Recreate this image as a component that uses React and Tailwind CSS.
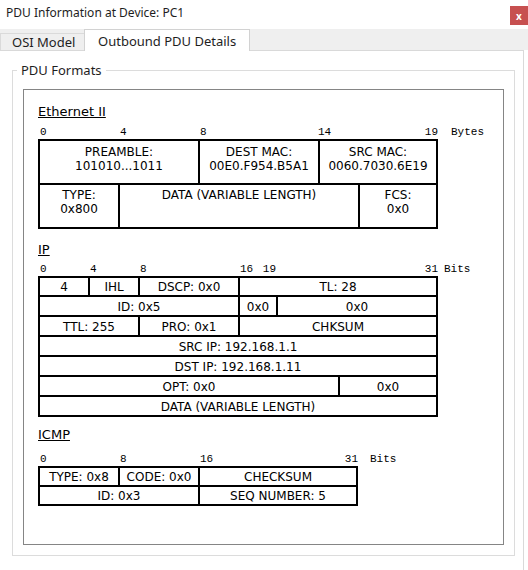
import React from 'react'

const sans = "font-['DejaVu_Sans',sans-serif]"
const mono = "font-['Liberation_Mono',monospace]"

const ethRows = [
  [
    { label: ['PREAMBLE:', '101010...1011'], w: 'w-[158px]' },
    { label: ['DEST MAC:', '00E0.F954.B5A1'], w: 'w-[120px]' },
    { label: ['SRC MAC:', '0060.7030.6E19'], w: 'flex-1' },
  ],
  [
    { label: ['TYPE:', '0x800'], w: 'w-[78px]' },
    { label: ['DATA (VARIABLE LENGTH)'], w: 'w-[240px]' },
    { label: ['FCS:', '0x0'], w: 'flex-1' },
  ],
]

const ipRows = [
  [
    { t: '4', w: 'w-[48px]' },
    { t: 'IHL', w: 'w-[50px]' },
    { t: 'DSCP: 0x0', w: 'w-[100px]' },
    { t: 'TL: 28', w: 'flex-1' },
  ],
  [
    { t: 'ID: 0x5', w: 'w-[198px]' },
    { t: '0x0', w: 'w-[38px]' },
    { t: '0x0', w: 'flex-1' },
  ],
  [
    { t: 'TTL: 255', w: 'w-[98px]' },
    { t: 'PRO: 0x1', w: 'w-[100px]' },
    { t: 'CHKSUM', w: 'flex-1' },
  ],
  [{ t: 'SRC IP: 192.168.1.1', w: 'flex-1' }],
  [{ t: 'DST IP: 192.168.1.11', w: 'flex-1' }],
  [
    { t: 'OPT: 0x0', w: 'w-[298px]' },
    { t: '0x0', w: 'flex-1' },
  ],
  [{ t: 'DATA (VARIABLE LENGTH)', w: 'flex-1' }],
]

const icmpRows = [
  [
    { t: 'TYPE: 0x8', w: 'w-[78px]' },
    { t: 'CODE: 0x0', w: 'w-[80px]' },
    { t: 'CHECKSUM', w: 'flex-1' },
  ],
  [
    { t: 'ID: 0x3', w: 'w-[158px]' },
    { t: 'SEQ NUMBER: 5', w: 'flex-1' },
  ],
]

const Heading = ({ children, className = '' }) => (
  <div className={`h-[16px] leading-[16px] text-[13px] text-black underline ${sans} ${className}`}>
    {children}
  </div>
)

// one-line rows (IP, ICMP)
const FieldTable = ({ rows, width, firstH, restH }) => (
  <div className={`${width} border-2 border-black ${sans} text-[12px] text-black`}>
    {rows.map((row, i) => (
      <div key={i} className={`flex ${i === 0 ? firstH : `${restH} border-t-2 border-black`}`}>
        {row.map((c, j) => (
          <div
            key={j}
            className={`${c.w} ${j > 0 ? 'border-l-2 border-black' : ''} flex items-center justify-center pt-[1px] whitespace-nowrap leading-none`}
          >
            {c.t}
          </div>
        ))}
      </div>
    ))}
  </div>
)

export default function App() {
  return (
    <div className="w-[528px] h-[570px] bg-white overflow-hidden font-['Noto_Sans',sans-serif] text-[#1e1e1e]">
      {/* title bar */}
      <div className="h-[29px] flex items-start">
        <div className="pl-[6px] pt-[4px] text-[12px] leading-[18px]">PDU Information at Device: PC1</div>
        <div className="ml-auto mt-[6px] w-[18px] h-[19px] bg-[#c75050] flex items-center justify-center">
          <span className="text-white text-[10px] font-bold leading-none">x</span>
        </div>
      </div>

      {/* tabs */}
      <div className="h-[21px] bg-[#efefef] flex items-start">
        <div className="mt-[4px] h-[17px] w-[84px] pl-[11px] border-t border-l border-[#dadada] text-[13px] leading-[16px]">
          OSI Model
        </div>
        <div className="relative z-10 h-[22px] w-[166px] pl-[13px] pt-[2px] bg-white border-t border-x border-[#d2d2d2] text-[13px] leading-[18px]">
          Outbound PDU Details
        </div>
      </div>

      {/* tab panel */}
      <div className="w-[524px] h-[520px] border-t border-r border-[#d9d9d9] pl-[12px] pt-[19px]">
        <div className="relative w-[503px] h-[486px] border border-[#dcdcdc] px-[10px] pt-[18px] pb-[10px]">
          <span className="absolute -top-[10px] left-[4px] bg-white px-[4px] text-[13px] leading-[18px]">
            PDU Formats
          </span>

          <div className="h-full border border-[#858585] pl-[14px] pt-[14px]">
            {/* Ethernet II */}
            <Heading>Ethernet II</Heading>
            <div className={`mt-[5px] h-[14px] leading-[14px] flex text-[11px] text-black ${mono}`}>
              <div className="w-[80px] pl-[2px]">0</div>
              <div className="w-[80px] pl-[2px]">4</div>
              <div className="w-[120px] pl-[2px]">8</div>
              <div className="w-[120px] flex justify-between">
                <span>14</span>
                <span>19</span>
              </div>
              <div className="ml-[13px]">Bytes</div>
            </div>
            <div className={`w-[400px] border-2 border-black ${sans} text-[12px] text-black`}>
              {ethRows.map((row, i) => (
                <div key={i} className={`flex ${i === 0 ? 'h-[42px]' : 'h-[44px] border-t-2 border-black'}`}>
                  {row.map((c, j) => (
                    <div
                      key={j}
                      className={`${c.w} ${j > 0 ? 'border-l-2 border-black' : ''} ${i === 0 ? 'pt-[4px]' : 'pt-[3px]'} text-center leading-[14px] whitespace-nowrap`}
                    >
                      {c.label.map((l, k) => (
                        <div key={k}>{l}</div>
                      ))}
                    </div>
                  ))}
                </div>
              ))}
            </div>

            {/* IP */}
            <Heading className="mt-[13px]">IP</Heading>
            <div className={`mt-[4px] h-[14px] leading-[14px] flex text-[11px] text-black ${mono}`}>
              <div className="w-[50px] pl-[2px]">0</div>
              <div className="w-[50px] pl-[2px]">4</div>
              <div className="w-[100px] pl-[2px]">8</div>
              <div className="w-[38px] pl-[2px] flex justify-between">
                <span>16</span>
                <span>19</span>
              </div>
              <div className="w-[162px] text-right">31</div>
              <div className="ml-[6px]">Bits</div>
            </div>
            <FieldTable rows={ipRows} width="w-[400px]" firstH="h-[17px]" restH="h-[20px]" />

            {/* ICMP */}
            <Heading className="mt-[10px]">ICMP</Heading>
            <div className={`mt-[9px] h-[14px] leading-[14px] flex text-[11px] text-black ${mono}`}>
              <div className="w-[80px] pl-[2px]">0</div>
              <div className="w-[80px] pl-[2px]">8</div>
              <div className="w-[160px] pl-[2px] flex justify-between">
                <span>16</span>
                <span>31</span>
              </div>
              <div className="ml-[12px]">Bits</div>
            </div>
            <FieldTable rows={icmpRows} width="w-[320px]" firstH="h-[17px]" restH="h-[19px]" />
          </div>
        </div>
      </div>
    </div>
  )
}
